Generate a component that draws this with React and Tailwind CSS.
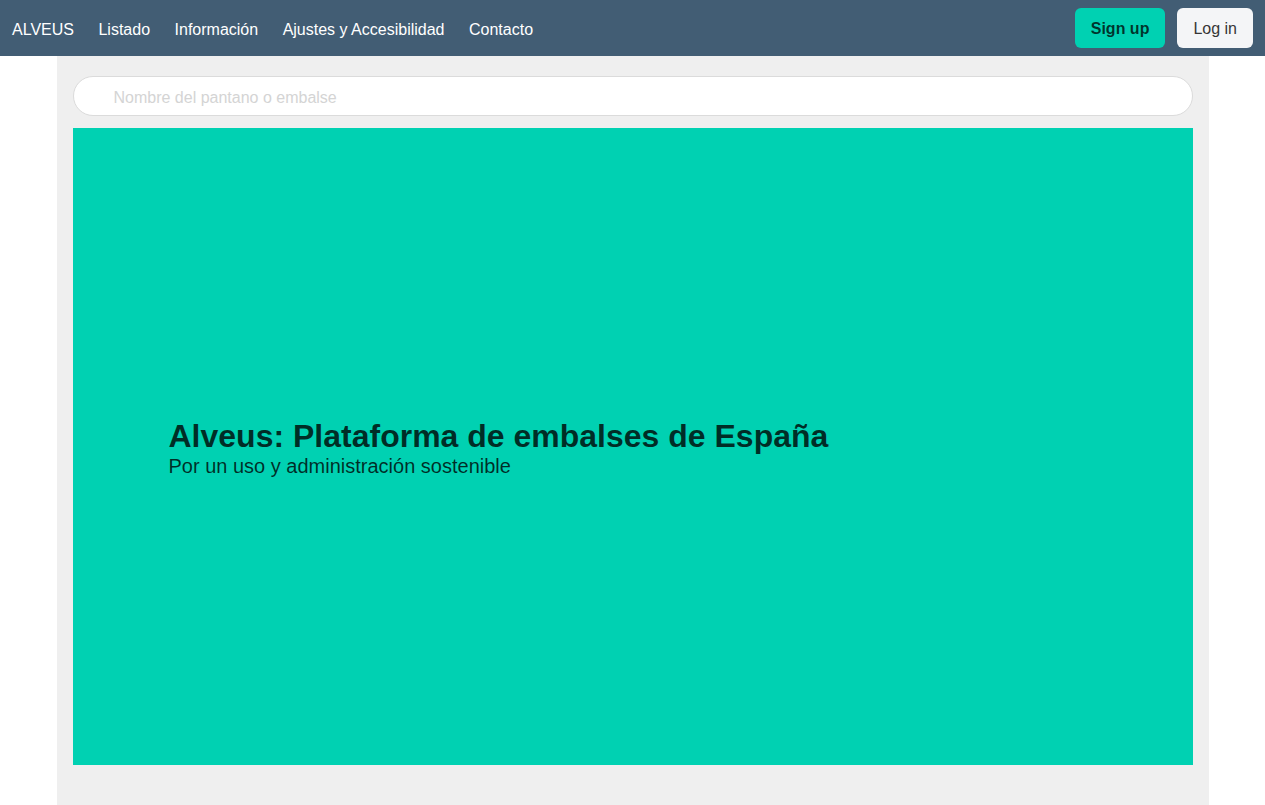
export default function App() {
  const font = { fontFamily: '"Liberation Sans", Arial, sans-serif' };
  return (
    <div style={font} className="min-h-[805px] bg-white">
      <nav className="h-14 bg-[#425d74] flex items-center justify-between px-3">
        <div className="flex items-center gap-[24.5px] text-white text-base pt-1">
          <span>ALVEUS</span>
          <span>Listado</span>
          <span>Información</span>
          <span>Ajustes y Accesibilidad</span>
          <span>Contacto</span>
        </div>
        <div className="flex items-center gap-3">
          <button className="h-10 px-4 pt-0.5 rounded-md bg-[#00d1b2] text-[rgba(0,0,0,0.75)] font-bold text-base">Sign up</button>
          <button className="h-10 px-4 pt-0.5 rounded-md bg-[#f4f5f7] text-[#363636] text-base">Log in</button>
        </div>
      </nav>
      <main className="mx-auto w-[1152px] bg-[#efefef] px-4 pt-5 pb-10">
        <input
          type="text"
          placeholder="Nombre del pantano o embalse"
          className="w-full h-10 rounded-full border border-[#dbdbdb] bg-white pl-10 pr-4 pt-1 text-base text-[#363636] placeholder:text-[#d4d4d4] outline-none"
        />
        <section className="mt-3 h-[637px] bg-[#00d1b2] flex flex-col justify-center px-24 pt-1">
          <h1 className="text-[32px] font-bold leading-[36px] text-[rgba(0,0,0,0.78)]">Alveus: Plataforma de embalses de España</h1>
          <p className="text-[20px] leading-[25px] text-[rgba(0,0,0,0.78)]">Por un uso y administración sostenible</p>
        </section>
      </main>
    </div>
  );
}
